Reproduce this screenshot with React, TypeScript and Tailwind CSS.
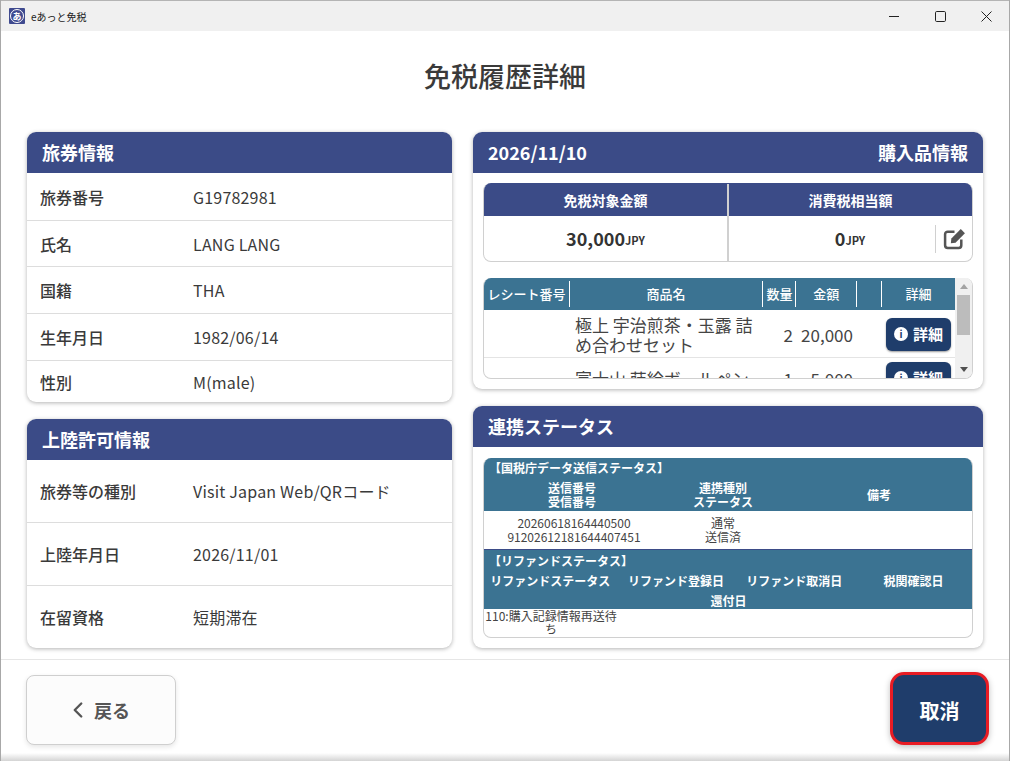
import React from "react";
import { ChevronLeft } from "lucide-react";

function Row({ label, value, h, last }: { label: string; value: string; h: string; last?: boolean }) {
  return (
    <div className={`flex items-center ${h} ${last ? "" : "border-b border-[#dddddd]"}`}>
      <div className="w-[166px] pl-[13px] text-[16px] font-medium text-[#3a3a3a]">{label}</div>
      <div className="text-[16px] tracking-[0.2px] text-[#3a3a3a]">{value}</div>
    </div>
  );
}

function CardHead({ children }: { children: React.ReactNode }) {
  return (
    <div className="flex h-[41px] items-center justify-between bg-[#3b4b87] px-[15px] text-[18px] font-bold text-white">
      {children}
    </div>
  );
}

function ItemRow({ name, qty, amount, h }: { name: string; qty: string; amount: string; h: string }) {
  return (
    <div className={`flex ${h} shrink-0 items-center border-b border-[#e4e4e4] text-[#444]`}>
      <div className="w-[85px]" />
      <div className="w-[193px] px-[6px] pt-[2px] text-[17px] leading-[20px]">{name}</div>
      <div className="w-[31px] pt-[2px] text-right text-[17px]">{qty}</div>
      <div className="w-[60px] pt-[2px] text-right text-[17px]">{amount}</div>
      <div className="ml-[33px] pt-[1px]">
        <button className="flex h-[33px] w-[65px] items-center justify-center gap-[5px] rounded-[6px] bg-[#1f3d6b] text-[15px] font-bold text-white shadow-[0_1px_2px_rgba(0,0,0,0.4)]">
          <span className="flex h-[14px] w-[14px] items-center justify-center rounded-full bg-white text-[10px] font-bold leading-none text-[#1f3d6b]">i</span>
          詳細
        </button>
      </div>
    </div>
  );
}

export default function App() {
  return (
    <div
      className="relative flex h-[761px] w-[1010px] flex-col overflow-hidden border-x border-x-[#a8a8a8] bg-white text-[#333]"
      style={{ fontFamily: '"Noto Sans CJK JP", "Noto Sans", sans-serif' }}
    >
      <div className="flex h-[31px] shrink-0 items-center justify-between border-t border-t-[#b4b4b4] bg-[#f0f0f0] pl-[8px]">
        <div className="flex items-center gap-[6px]">
          <div className="flex h-[16px] w-[16px] items-center justify-center rounded-[1px] bg-[#3f4a8f]">
            <div className="flex h-[14px] w-[14px] items-center justify-center rounded-full border border-white text-[9px] font-bold leading-none text-white">あ</div>
          </div>
          <span className="text-[10px] text-[#222]">eあっと免税</span>
        </div>
        <div className="flex items-center text-[#222]">
          <div className="flex h-[30px] w-[46px] items-center justify-center">
            <svg width="10" height="10" viewBox="0 0 10 10"><path d="M0 5.5H10" stroke="#222" strokeWidth="1" /></svg>
          </div>
          <div className="flex h-[30px] w-[46px] items-center justify-center">
            <svg width="11" height="11" viewBox="0 0 11 11" fill="none"><rect x="0.5" y="0.5" width="10" height="10" rx="1.2" stroke="#222" strokeWidth="1" /></svg>
          </div>
          <div className="flex h-[30px] w-[46px] items-center justify-center">
            <svg width="11" height="11" viewBox="0 0 11 11" fill="none"><path d="M0.5 0.5L10.5 10.5M10.5 0.5L0.5 10.5" stroke="#222" strokeWidth="1" /></svg>
          </div>
        </div>
      </div>

      <div className="flex h-[101px] shrink-0 items-start justify-center pt-[25px] text-[27px] font-medium leading-[40px] text-[#3a3a3a]">
        免税履歴詳細
      </div>

      <div className="flex h-[528px] shrink-0 gap-[21px] border-b border-[#e6e6e6] pl-[26px]">
        <div className="flex w-[425px] flex-col gap-[17px]">
          <div className="h-[270px] overflow-hidden rounded-[9px] bg-white shadow-[0_1px_4px_rgba(0,0,0,0.3)]">
            <CardHead>旅券情報</CardHead>
            <Row h="h-[48px]" label="旅券番号" value="G19782981" />
            <Row h="h-[46px]" label="氏名" value="LANG LANG" />
            <Row h="h-[47px]" label="国籍" value="THA" />
            <Row h="h-[47px]" label="生年月日" value="1982/06/14" />
            <Row h="h-[41px]" label="性別" value="M(male)" last />
          </div>
          <div className="h-[229px] overflow-hidden rounded-[9px] bg-white shadow-[0_1px_4px_rgba(0,0,0,0.3)]">
            <CardHead>上陸許可情報</CardHead>
            <Row h="h-[63px]" label="旅券等の種別" value="Visit Japan Web/QRコード" />
            <Row h="h-[63px]" label="上陸年月日" value="2026/11/01" />
            <Row h="h-[62px]" label="在留資格" value="短期滞在" last />
          </div>
        </div>

        <div className="flex w-[510px] flex-col gap-[17px]">
          <div className="h-[257px] overflow-hidden rounded-[9px] bg-white shadow-[0_1px_4px_rgba(0,0,0,0.3)]">
            <CardHead><span>2026/11/10</span><span>購入品情報</span></CardHead>
            <div className="px-[10px] pt-[10px]">
              <div className="h-[79px] overflow-hidden rounded-[8px] border border-[#d0d0d0] border-t-0">
                <div className="flex h-[33px] bg-[#3b4b87] pt-[1px] text-[14px] font-bold text-white">
                  <div className="flex w-[245px] items-center justify-center border-r-2 border-[#d0d0d0]">免税対象金額</div>
                  <div className="flex flex-1 items-center justify-center">消費税相当額</div>
                </div>
                <div className="flex h-[45px]">
                  <div className="flex w-[245px] items-center justify-center border-r-2 border-[#d0d0d0] font-bold text-[#333]">
                    <span className="text-[18px]">30,000</span><span className="pt-[3px] text-[11px]">JPY</span>
                  </div>
                  <div className="flex flex-1 items-center">
                    <div className="flex flex-1 items-center justify-center pl-[36px] font-bold text-[#333]">
                      <span className="text-[18px]">0</span><span className="pt-[3px] text-[11px]">JPY</span>
                    </div>
                    <div className="flex h-[28px] w-[37px] items-center justify-center border-l border-[#d0d0d0]">
                      <svg width="23" height="23" viewBox="0 0 22 22" fill="none">
                        <path d="M11 4.5 H4.5 A2.5 2.5 0 0 0 2 7 V17.5 A2.5 2.5 0 0 0 4.5 20 H15 A2.5 2.5 0 0 0 17.5 17.5 V12" stroke="#555" strokeWidth="2.4" />
                        <path d="M8 11 L17 2 L21 6 L12 15 L7.5 15.5 Z" fill="#555" />
                      </svg>
                    </div>
                  </div>
                </div>
              </div>
              <div className="mt-[16px] flex h-[101px] overflow-hidden rounded-[8px] border border-[#d0d0d0] border-t-0">
                <div className="flex w-[472px] flex-col overflow-hidden">
                  <div className="flex h-[32px] shrink-0 items-center bg-[#3b7392] text-[13px] font-medium text-white">
                    <div className="flex h-[26px] w-[86px] items-center justify-center border-r border-white whitespace-nowrap">レシート番号</div>
                    <div className="flex h-[26px] w-[193px] items-center justify-center">商品名</div>
                    <div className="flex h-[26px] w-[34px] items-center justify-center border-x border-white">数量</div>
                    <div className="flex h-[26px] w-[60px] items-center justify-center">金額</div>
                    <div className="h-[26px] w-[26px] border-x border-white" />
                    <div className="flex h-[26px] w-[73px] items-center justify-center">詳細</div>
                  </div>
                  <ItemRow h="h-[48px]" name="極上 宇治煎茶・玉露 詰め合わせセット" qty="2" amount="20,000" />
                  <ItemRow h="h-[40px]" name="富士山 蒔絵ボールペン" qty="1" amount="5,000" />
                </div>
                <div className="flex w-[17px] flex-col items-center bg-[#f0f0f0]">
                  <div className="mt-[6px] h-0 w-0 border-x-[4px] border-b-[5px] border-x-transparent border-b-[#a3a3a3]" />
                  <div className="mt-[6px] h-[40px] w-[13px] bg-[#bcbcbc]" />
                  <div className="mt-auto mb-[6px] h-0 w-0 border-x-[4px] border-t-[5px] border-x-transparent border-t-[#505050]" />
                </div>
              </div>
            </div>
          </div>

          <div className="h-[242px] overflow-hidden rounded-[9px] bg-white shadow-[0_1px_4px_rgba(0,0,0,0.3)]">
            <CardHead>連携ステータス</CardHead>
            <div className="px-[10px] pt-[11px]">
              <div className="h-[180px] overflow-hidden rounded-[8px] border border-[#d0d0d0] border-t-0 text-[12px] leading-[14px]">
                <div className="h-[53px] bg-[#3b7392] pt-[3px] font-bold text-white">
                  <div className="h-[14px] pl-[5px] whitespace-nowrap">【国税庁データ送信ステータス】</div>
                  <div className="mt-[6px] flex text-center">
                    <div className="w-[176px]">送信番号<br />受信番号</div>
                    <div className="ml-[18px] w-[90px]">連携種別<br />ステータス</div>
                    <div className="flex flex-1 items-center justify-center pl-[18px]">備考</div>
                  </div>
                </div>
                <div className="flex h-[39px] items-center border-b border-[#3b4b87] text-center text-[#444]">
                  <div className="w-[180px]">20260618164440500<br />91202612181644407451</div>
                  <div className="ml-[14px] w-[90px]">通常<br />送信済</div>
                </div>
                <div className="h-[59px] bg-[#3b7392] pt-[4px] font-bold text-white">
                  <div className="h-[14px] pl-[5px] whitespace-nowrap">【リファンドステータス】</div>
                  <div className="mt-[6px] flex text-center whitespace-nowrap">
                    <div className="w-[133px]">リファンドステータス</div>
                    <div className="w-[119px]">リファンド登録日</div>
                    <div className="w-[118px]">リファンド取消日</div>
                    <div className="w-[119px] pl-[2px]">税関確認日</div>
                  </div>
                  <div className="mt-[6px] pl-[1px] text-center">還付日</div>
                </div>
                <div className="w-[133px] pl-[1px] text-center leading-[13px] text-[#444]">110:購入記録情報再送待ち</div>
              </div>
            </div>
          </div>
        </div>
      </div>

      <div className="flex flex-1 items-start justify-between pt-[15px] pl-[25px] pr-[20px]">
        <button className="flex h-[70px] w-[150px] items-center justify-center gap-[3px] rounded-[8px] border border-[#cfcfcf] bg-[#fcfcfc] pr-[7px] text-[18px] font-bold text-[#555] shadow-[0_2px_5px_rgba(0,0,0,0.1)]">
          <ChevronLeft size={26} strokeWidth={2.2} />
          戻る
        </button>
        <button className="-mt-[3px] flex h-[73px] w-[99px] items-center justify-center rounded-[14px] border-[3px] border-[#e81c24] bg-[#1f3d6b] pt-[5px] text-[20px] font-bold text-white shadow-[0_2px_6px_rgba(0,0,0,0.25)]">
          取消
        </button>
      </div>

      <div className="absolute inset-x-0 bottom-0 h-[8px] bg-gradient-to-b from-transparent to-[#d4d4d4]" />
    </div>
  );
}
